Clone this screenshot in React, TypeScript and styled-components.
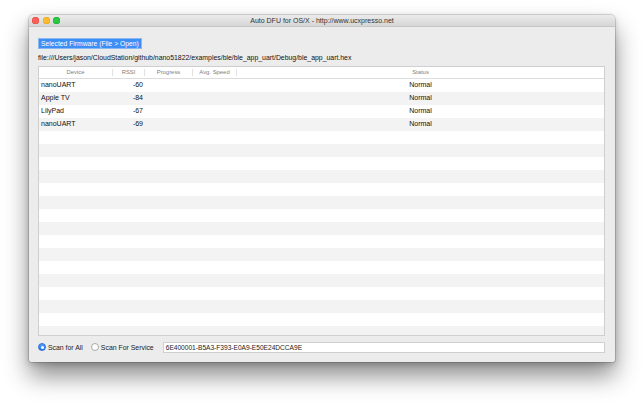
import React from 'react';
import styled, { createGlobalStyle } from 'styled-components';

const GlobalStyle = createGlobalStyle`
    html, body {
        margin: 0;
        padding: 0;
        background: #ffffff;
    }
    body {
        font-family: "Liberation Sans", Arial, sans-serif;
        color: #111;
    }
`;

const Page = styled.div`
    width: 643px;
    height: 402px;
    padding: 15px 0 0 29px;
    box-sizing: border-box;
    overflow: hidden;
`;

const Window = styled.div`
    width: 586px;
    height: 347px;
    background: #ececec;
    border-radius: 4px 4px 2px 2px;
    box-shadow: 0 0 0 0.5px rgba(0, 0, 0, 0.28), 0 14px 24px rgba(0, 0, 0, 0.45), 0 2px 6px rgba(0, 0, 0, 0.18);
    display: flex;
    flex-direction: column;
    overflow: hidden;
`;

const TitleBar = styled.div`
    height: 12px;
    flex: none;
    display: flex;
    align-items: center;
    position: relative;
    background: linear-gradient(#ebebeb, #d6d6d6);
    border-bottom: 1px solid #c6c6c6;
    box-sizing: border-box;
`;

const Lights = styled.div`
    display: flex;
    gap: 3.5px;
    padding-left: 3px;
    position: relative;
    z-index: 1;
`;

const Light = styled.span<{ $color: string; $edge: string }>`
    width: 7px;
    height: 7px;
    border-radius: 50%;
    background: ${(p) => p.$color};
    box-shadow: inset 0 0 0 0.5px ${(p) => p.$edge};
`;

const Title = styled.div`
    position: absolute;
    left: 0;
    right: 0;
    text-align: center;
    font-size: 7px;
    color: #333;
    line-height: 12px;
`;

const Body = styled.div`
    flex: 1;
    display: flex;
    flex-direction: column;
    padding: 11px 10px 0 9px;
`;

const FirmwareButton = styled.div`
    align-self: flex-start;
    height: 11px;
    width: 104px;
    box-sizing: border-box;
    background: #3d8ef5;
    border: 1px solid #8ab8f2;
    color: #fff;
    font-size: 6.75px;
    line-height: 9px;
    padding-left: 2px;
    white-space: nowrap;
    overflow: hidden;
`;

const PathLine = styled.div`
    margin-top: 4px;
    height: 9px;
    line-height: 9px;
    font-size: 6.9px;
    color: #111;
    white-space: nowrap;
`;

const Table = styled.div`
    margin-top: 4px;
    height: 270px;
    background: #fff;
    border: 1px solid #cfcfcf;
    box-sizing: border-box;
    overflow: hidden;
`;

const cols = '74px 32px 48px 44px 1fr';

const HeaderRow = styled.div`
    display: grid;
    grid-template-columns: ${cols};
    height: 11px;
    border-bottom: 1px solid #dcdcdc;
    background: #fff;
`;

const HeaderCell = styled.div<{ $last?: boolean }>`
    font-size: 5.9px;
    color: #808080;
    text-align: center;
    border-right: ${(p) => (p.$last ? 'none' : '1px solid #e2e2e2')};
    margin: 2px 0;
    line-height: 7px;
`;

const Row = styled.div<{ $odd: boolean }>`
    display: grid;
    grid-template-columns: ${cols};
    height: 13px;
    background: ${(p) => (p.$odd ? '#f3f3f3' : '#ffffff')};
    font-size: 7px;
    line-height: 12px;
    color: #111;
`;

const Cell = styled.div<{ $align?: 'left' | 'right' | 'center' }>`
    text-align: ${(p) => p.$align || 'left'};
    padding: 0 2px;
    white-space: nowrap;
`;

const Footer = styled.div`
    height: 26px;
    display: flex;
    align-items: center;
    padding-bottom: 4px;
    box-sizing: border-box;
`;

const RadioItem = styled.label`
    display: flex;
    align-items: center;
    gap: 2px;
    font-size: 6.9px;
    color: #222;
    margin-right: 8px;
`;

const RadioDot = styled.span<{ $on: boolean }>`
    width: 8px;
    height: 8px;
    border-radius: 50%;
    box-sizing: border-box;
    display: flex;
    align-items: center;
    justify-content: center;
    background: ${(p) => (p.$on ? 'linear-gradient(#5aa2f7, #1f74ee)' : '#fff')};
    border: ${(p) => (p.$on ? '0.5px solid #2a6fd6' : '0.5px solid #a8a8a8')};
    &::after {
        content: '';
        width: 3px;
        height: 3px;
        border-radius: 50%;
        background: #fff;
        display: ${(p) => (p.$on ? 'block' : 'none')};
    }
`;

const ServiceField = styled.div`
    flex: 1;
    height: 11px;
    margin-left: 1px;
    background: #fff;
    border: 1px solid #cfcfcf;
    box-sizing: border-box;
    font-size: 6.6px;
    line-height: 9px;
    padding-left: 2px;
    color: #222;
    white-space: nowrap;
`;

const devices = [
    { name: 'nanoUART', rssi: '-60', status: 'Normal' },
    { name: 'Apple TV', rssi: '-84', status: 'Normal' },
    { name: 'LilyPad', rssi: '-67', status: 'Normal' },
    { name: 'nanoUART', rssi: '-69', status: 'Normal' },
];

const App = () => {
    const rows = Array.from({ length: 21 }, (_, i) => devices[i]);

    return (
        <>
            <GlobalStyle />
            <Page>
                <Window>
                    <TitleBar>
                        <Lights>
                            <Light $color="#fc5f57" $edge="#de4a41" />
                            <Light $color="#fdbc2e" $edge="#de9f23" />
                            <Light $color="#28c840" $edge="#1daa2c" />
                        </Lights>
                        <Title>Auto DFU for OS/X - http://www.ucxpresso.net</Title>
                    </TitleBar>
                    <Body>
                        <FirmwareButton>Selected Firmware (File &gt; Open)</FirmwareButton>
                        <PathLine>file:///Users/jason/CloudStation/github/nano51822/examples/ble/ble_app_uart/Debug/ble_app_uart.hex</PathLine>
                        <Table>
                            <HeaderRow>
                                <HeaderCell>Device</HeaderCell>
                                <HeaderCell>RSSI</HeaderCell>
                                <HeaderCell>Progress</HeaderCell>
                                <HeaderCell>Avg. Speed</HeaderCell>
                                <HeaderCell $last>Status</HeaderCell>
                            </HeaderRow>
                            {rows.map((d, i) => (
                                <Row key={i} $odd={i % 2 === 1}>
                                    <Cell>{d?.name}</Cell>
                                    <Cell $align="right">{d?.rssi}</Cell>
                                    <Cell />
                                    <Cell />
                                    <Cell $align="center">{d?.status}</Cell>
                                </Row>
                            ))}
                        </Table>
                        <Footer>
                            <RadioItem>
                                <RadioDot $on />
                                Scan for All
                            </RadioItem>
                            <RadioItem>
                                <RadioDot $on={false} />
                                Scan For Service
                            </RadioItem>
                            <ServiceField>6E400001-B5A3-F393-E0A9-E50E24DCCA9E</ServiceField>
                        </Footer>
                    </Body>
                </Window>
            </Page>
        </>
    );
};

export default App;
